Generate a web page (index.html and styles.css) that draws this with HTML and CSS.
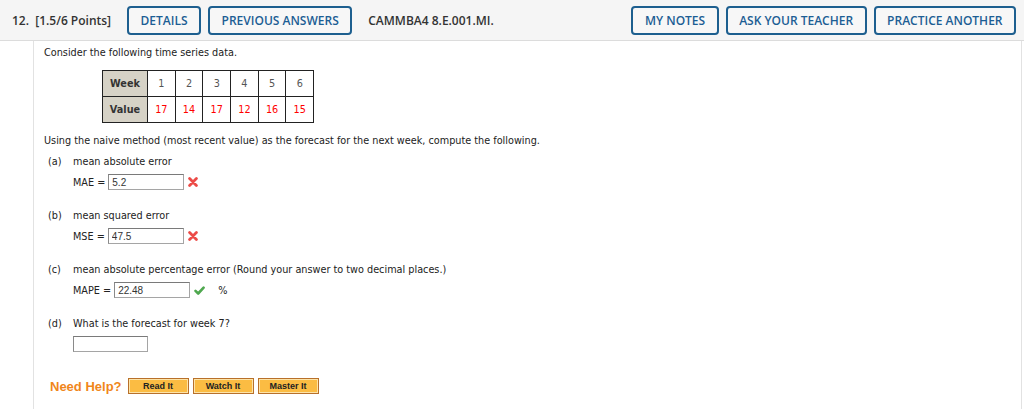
FILE: index.html
```html
<!DOCTYPE html>
<html lang="en">
<head>
  <meta charset="UTF-8">
  <title>Question 12</title>
  <link rel="stylesheet" href="styles.css">
</head>
<body>

<div class="qheader">
  <span class="qnum">12.&nbsp; [1.5/6 Points]</span>
  <button class="hbtn">DETAILS</button>
  <button class="hbtn">PREVIOUS ANSWERS</button>
  <span class="qcode">CAMMBA4 8.E.001.MI.</span>
  <div class="hright">
    <button class="hbtn">MY NOTES</button>
    <button class="hbtn">ASK YOUR TEACHER</button>
    <button class="hbtn">PRACTICE ANOTHER</button>
  </div>
</div>

<div class="qbody">
  <p class="intro">Consider the following time series data.</p>

  <table class="series">
    <tr>
      <th>Week</th>
      <td>1</td><td>2</td><td>3</td><td>4</td><td>5</td><td>6</td>
    </tr>
    <tr>
      <th>Value</th>
      <td class="val">17</td><td class="val">14</td><td class="val">17</td><td class="val">12</td><td class="val">16</td><td class="val">15</td>
    </tr>
  </table>

  <p class="intro lead">Using the naive method (most recent value) as the forecast for the next week, compute the following.</p>

  <div class="part">
    <div class="plabel"><span class="pletter">(a)</span>mean absolute error</div>
    <div class="answer">
      MAE = <input class="ans" type="text" value="5.2">
      <svg class="mark" width="10" height="10" viewBox="0 0 10 10"><path d="M1.6 1.6 L8.4 8.4 M8.4 1.6 L1.6 8.4" stroke="#ec4b47" stroke-width="2.8" stroke-linecap="round"/></svg>
    </div>
  </div>

  <div class="part">
    <div class="plabel"><span class="pletter">(b)</span>mean squared error</div>
    <div class="answer">
      MSE = <input class="ans" type="text" value="47.5">
      <svg class="mark" width="10" height="10" viewBox="0 0 10 10"><path d="M1.6 1.6 L8.4 8.4 M8.4 1.6 L1.6 8.4" stroke="#ec4b47" stroke-width="2.8" stroke-linecap="round"/></svg>
    </div>
  </div>

  <div class="part">
    <div class="plabel"><span class="pletter">(c)</span>mean absolute percentage error (Round your answer to two decimal places.)</div>
    <div class="answer">
      MAPE = <input class="ans" type="text" value="22.48">
      <svg class="mark check" width="11" height="9" viewBox="0 0 11 9"><path d="M1.5 4.8 L4.2 7.5 L9.6 1.6" fill="none" stroke="#4fa84f" stroke-width="2.6" stroke-linejoin="round" stroke-linecap="round"/></svg>
      <span class="unit">%</span>
    </div>
  </div>

  <div class="part">
    <div class="plabel"><span class="pletter">(d)</span>What is the forecast for week 7?</div>
    <div class="answer">
      <input class="ans blank" type="text" value="">
    </div>
  </div>

  <div class="help">
    <span class="needhelp">Need Help?</span>
    <button class="hlp">Read It</button>
    <button class="hlp">Watch It</button>
    <button class="hlp">Master It</button>
  </div>
</div>

</body>
</html>
```

FILE: styles.css
```css
body {
  margin: 0;
  font-family: "DejaVu Sans", Verdana, sans-serif;
  font-size: 9.7px;
  color: #222;
  background: #fff;
}

.qheader {
  display: flex;
  align-items: center;
  height: 41px;
  padding: 0 8px 0 12px;
  background: #f5f5f5;
  border-bottom: 1px solid #dcdcdc;
  font-family: "Open Sans", sans-serif;
  box-sizing: border-box;
}
.qnum {
  font-weight: 600;
  font-size: 12px;
  color: #333;
  margin-right: 16px;
}
.hbtn {
  font-family: "Open Sans", sans-serif;
  font-weight: 600;
  font-size: 12px;
  color: #1c5e94;
  background: #f7f7f7;
  border: 2px solid #1d5f8f;
  border-radius: 4px;
  height: 29px;
  padding: 0 11.5px;
  margin-right: 7px;
}
.qcode {
  font-weight: 600;
  font-size: 12px;
  color: #333;
  margin-left: 9px;
}
.hright {
  margin-left: auto;
  display: flex;
}
.hright .hbtn:last-child {
  margin-right: 0;
}

.qbody {
  margin: 0 2px 0 33px;
  border-left: 1px solid #e2e2e2;
  border-right: 1px solid #e2e2e2;
  padding: 5px 0 14px 10px;
  height: 368px;
  box-sizing: border-box;
}
.intro {
  margin: 0 0 10px;
  line-height: 14px;
}
.intro.lead {
  margin-bottom: 7px;
}

.series {
  border-collapse: collapse;
  margin: 0 0 11px 58px;
}
.series th, .series td {
  border: 1px solid #222;
  height: 25px;
  text-align: center;
  padding: 0;
}
.series th {
  background: #d6d2c6;
  width: 44px;
  font-weight: bold;
  color: #333;
}
.series td {
  width: 26.7px;
  color: #555;
}
.series td.val {
  color: #f00;
}

.part {
  margin: 0 0 18px 4px;
}
.plabel {
  line-height: 14px;
  margin-bottom: 4px;
}
.pletter {
  display: inline-block;
  width: 25px;
}
.answer {
  display: flex;
  align-items: center;
  margin-left: 25px;
  height: 18px;
}
.ans {
  flex: none;
  width: 76px;
  height: 16px;
  box-sizing: border-box;
  border: 1px solid #a5a5a5;
  border-top-color: #7a7a7a;
  border-left-color: #8a8a8a;
  padding: 0 3px;
  margin-left: 3px;
  font-family: "Liberation Sans", Arial, sans-serif;
  font-size: 10px;
  color: #333;
}
.ans.blank {
  margin-left: 0;
  width: 75px;
}
.mark {
  margin-left: 4px;
}
.check {
  margin-left: 4px;
}
.unit {
  margin-left: 13px;
}

.help {
  display: flex;
  align-items: center;
  margin: 25px 0 0 6px;
}
.needhelp {
  font-family: "Liberation Sans", Arial, sans-serif;
  font-weight: bold;
  font-size: 13px;
  color: #f0861a;
  margin-right: 6px;
}
.hlp {
  font-family: "Liberation Sans", Arial, sans-serif;
  font-weight: bold;
  font-size: 9px;
  color: #222;
  width: 61px;
  height: 16px;
  padding: 0;
  margin-right: 4px;
  background: #fbbc43;
  border: 1px solid #b8702a;
  box-shadow: inset 0 0 0 1px #fde4a8;
}
```
